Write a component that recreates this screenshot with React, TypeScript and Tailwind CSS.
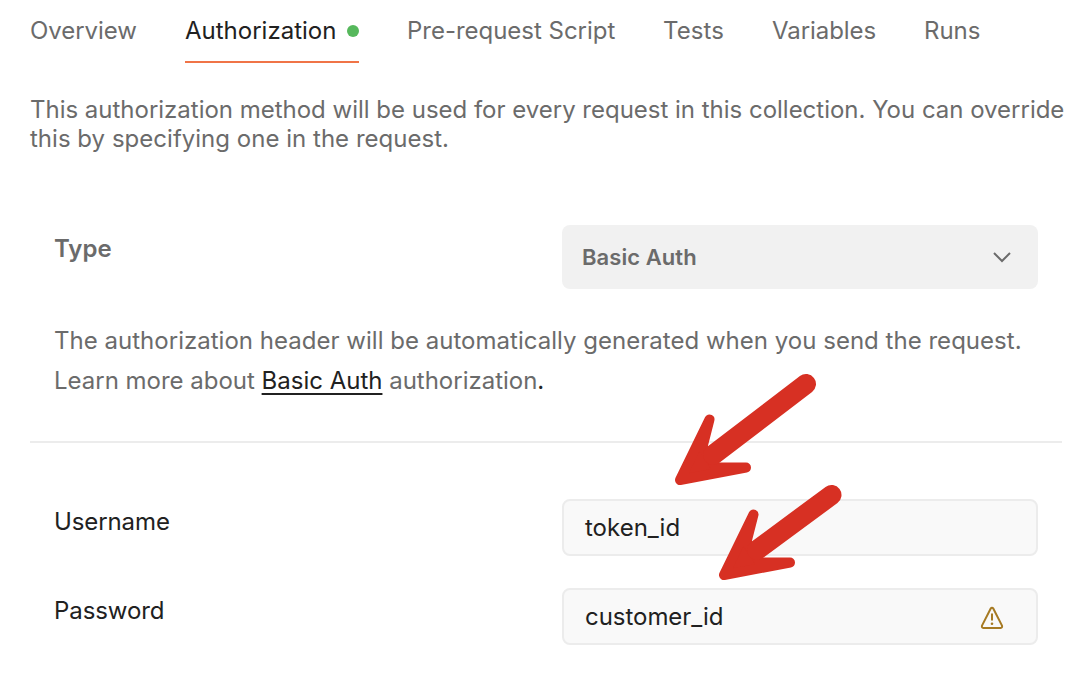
const tabs = [
  { name: 'Overview', cls: 'ml-[30px] w-[155px] tracking-[-0.06px]' },
  { name: 'Authorization', cls: 'w-[222px]', active: true },
  { name: 'Pre-request Script', cls: 'w-[256px] tracking-[-0.02px]' },
  { name: 'Tests', cls: 'w-[109px] tracking-[0.1px]' },
  { name: 'Variables', cls: 'w-[152px] tracking-[-0.06px]' },
  { name: 'Runs', cls: 'w-[80px] tracking-[-0.06px]' },
];

function Arrow({ className, endX, endY }: { className: string; endX: number; endY: number }) {
  return (
    <svg
      className={className}
      viewBox="0 0 150 120"
      fill="#d73023"
      stroke="#d73023"
      strokeLinejoin="round"
      strokeLinecap="round"
    >
      <path strokeWidth="10" d="M10 110L39.5 49.5L32.5 77L46 97.5L76 97.6Z" />
      <line strokeWidth="20" x1="43" y1="85" x2={endX} y2={endY} />
    </svg>
  );
}

export default function App() {
  return (
    <main className="relative h-[676px] w-[1082px] overflow-hidden bg-white font-['Inter',sans-serif] text-[24px] text-[#6b6b6b]">
      <nav className="flex h-[63px] whitespace-nowrap">
        {tabs.map((t) => (
          <div key={t.name} className={`shrink-0 ${t.cls}`}>
            {t.active ? (
              <div className="flex h-[63px] w-[174px] items-start justify-between border-b-2 border-[#f07447] pt-4 leading-[30px] text-[#212121]">
                <span>{t.name}</span>
                <span className="mt-[9px] size-3 rounded-full bg-[#56b85c]" />
              </div>
            ) : (
              <div className="pt-4 leading-[30px]">{t.name}</div>
            )}
          </div>
        ))}
      </nav>
      <p className="ml-[30px] mt-8 whitespace-nowrap leading-[29px]">
        <span className="tracking-[-0.012px]">
          This authorization method will be used for every request in this collection. You can override
        </span>
        <br />
        <span className="tracking-[0.02px]">this by specifying one in the request.</span>
      </p>
      <div className="ml-[54px] mt-[72px] flex h-16 font-semibold">
        <div className="w-[508px] pt-[9px] leading-[30px]">Type</div>
        <div className="flex w-[476px] items-center justify-between rounded-lg bg-[#f1f1f1] pl-5 pr-[26px]">
          <span className="text-[22px] tracking-[0.06px]">Basic Auth</span>
          <svg className="h-5 w-5" viewBox="0 0 20 20" fill="none" stroke="#6b6b6b" strokeWidth="2">
            <path d="M2 6l8 8 8-8" />
          </svg>
        </div>
      </div>
      <p className="ml-[54px] mt-8 whitespace-nowrap leading-[40px]">
        <span className="tracking-[0.02px]">
          The authorization header will be automatically generated when you send the request.
        </span>
        <br />
        <span className="tracking-[-0.01px]">
          Learn more about{' '}
          <a className="text-[#212121] underline decoration-2 underline-offset-4 [text-decoration-skip-ink:none]">
            Basic Auth
          </a>{' '}
          authorization<span className="text-[#212121]">.</span>
        </span>
      </p>
      <hr className="ml-[30px] mt-10 w-[1032px] border-t-2 border-[#ececec]" />
      <div className="ml-[54px] mt-14 flex flex-col gap-8 text-[#212121]">
        <label className="flex h-[57px]">
          <span className="w-[508px] pt-2 leading-[30px] tracking-[-0.1px]">Username</span>
          <span className="flex w-[476px] items-center rounded-lg border-2 border-[#ececec] bg-[#f9f9f9] pl-[21px]">
            token_id
          </span>
        </label>
        <label className="flex h-[57px]">
          <span className="w-[508px] pt-2 leading-[30px] tracking-[-0.08px]">Password</span>
          <span className="flex w-[476px] items-center justify-between rounded-lg border-2 border-[#ececec] bg-[#f9f9f9] pl-[21px] pr-8">
            <span className="tracking-[-0.04px]">customer_id</span>
            <svg
              className="mt-[3px] h-6 w-6"
              viewBox="0 0 24 24"
              fill="none"
              stroke="#a67a23"
              strokeWidth="2"
              strokeLinejoin="round"
            >
              <path d="M10.6 2.7Q12 0.9 13.4 2.7L22 19.6Q22.6 21.7 20.6 22H3.4Q1.4 21.7 2 19.6Z" />
              <path d="M12 7.5V14.5" />
              <circle cx="12" cy="17.7" r="1.3" fill="#a67a23" stroke="none" />
            </svg>
          </span>
        </label>
      </div>
      <Arrow className="absolute left-[670px] top-[370px] h-[120px] w-[150px]" endX={136} endY={14} />
      <Arrow className="absolute left-[714px] top-[465px] h-[120px] w-[150px]" endX={117.5} endY={30} />
    </main>
  );
}
